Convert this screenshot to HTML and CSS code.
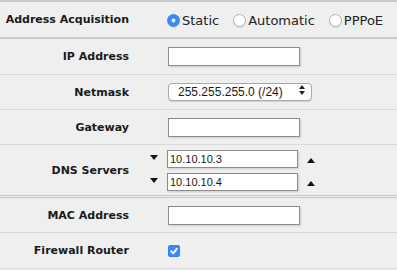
FILE: index.html
```html
<!DOCTYPE html>
<html lang="en">
<head>
    <meta charset="UTF-8">
    <title>Interface Settings</title>
    <link rel="stylesheet" href="styles.css">
</head>
<body>

    <!-- Interface Settings -->
    <form class="settings">

        <div class="row row-acq group-end">
            <div class="label">Address Acquisition</div>
            <div class="control radios">
                <label class="radio"><input type="radio" name="acq" checked>Static</label>
                <label class="radio"><input type="radio" name="acq">Automatic</label>
                <label class="radio"><input type="radio" name="acq">PPPoE</label>
            </div>
        </div>

        <div class="row row-tall">
            <div class="label">IP Address</div>
            <div class="control"><input type="text" class="field"></div>
        </div>

        <div class="row">
            <div class="label">Netmask</div>
            <div class="control">
                <div class="select-wrap">
                    <select class="select">
                        <option>255.255.255.0 (/24)</option>
                    </select>
                    <svg class="select-arrows" width="6" height="10" viewBox="0 0 6 10">
                        <path d="M3 0 L6 4 L0 4 Z M0 6 L6 6 L3 10 Z" fill="#222"/>
                    </svg>
                </div>
            </div>
        </div>

        <div class="row">
            <div class="label">Gateway</div>
            <div class="control"><input type="text" class="field"></div>
        </div>

        <div class="row row-dns group-end-double">
            <div class="label dns-label">DNS Servers</div>

            <span class="arrow arrow-down"></span>
            <div class="control dns-line">
                <input type="text" class="field field-dns" value="10.10.10.3">
                <span class="arrow arrow-up"></span>
            </div>

            <span class="arrow arrow-down"></span>
            <div class="control dns-line">
                <input type="text" class="field field-dns" value="10.10.10.4">
                <span class="arrow arrow-up"></span>
            </div>
        </div>

        <div class="row">
            <div class="label">MAC Address</div>
            <div class="control"><input type="text" class="field"></div>
        </div>

        <div class="row row-tall">
            <div class="label">Firewall Router</div>
            <div class="control">
                <span class="check">
                    <svg width="12" height="12" viewBox="0 0 12 12">
                        <path d="M3.2 6.3 L5.2 8.4 L8.9 3.6" fill="none" stroke="#fff" stroke-width="1.8" stroke-linecap="round" stroke-linejoin="round"/>
                    </svg>
                </span>
            </div>
        </div>

    </form>

</body>
</html>
```

FILE: styles.css
```css
/* Interface settings form */
body {
    margin: 0;
    padding: 0;
    background-color: #efefef;
    color: #1a1a1a;
    font-family: "DejaVu Sans", Verdana, sans-serif;
}

.settings {
    margin: 0;
    border-top: 2px solid #cbcbcb;
}

/* Rows */
.row {
    display: grid;
    grid-template-columns: 129px 39px 1fr;
    align-items: center;
    height: 34px;
    border-bottom: 1px solid #d9d9d9;
}

.row-acq {
    height: 35px;
}

.row-tall {
    height: 35px;
}

.group-end {
    border-bottom: 2px solid #cbcbcb;
}

.group-end-double {
    border-bottom: 3px double #c6c6c6;
}

.label {
    grid-column: 1;
    text-align: right;
    font-weight: bold;
    font-size: 11px;
    color: #1a1a1a;
}

.control {
    grid-column: 3;
    display: flex;
    align-items: center;
}

/* Radios */
.radios {
    margin-left: -1px;
    gap: 14px;
    padding-top: 2px;
}

.radio {
    display: flex;
    align-items: center;
    font-size: 13px;
    color: #222;
}

.radio input {
    appearance: none;
    -webkit-appearance: none;
    width: 13px;
    height: 13px;
    margin: 0 2px 0 0;
    border: 1px solid #b0b0b0;
    border-radius: 50%;
    background: #fff;
    box-shadow: 0 1px 1px rgba(0, 0, 0, 0.08);
}

.radio input:checked {
    border-color: #3a84ef;
    background: radial-gradient(circle, #fff 0 1.6px, #3c8af6 2.3px);
}

/* Text fields */
.field {
    box-sizing: border-box;
    width: 132px;
    height: 19px;
    margin: 0;
    padding: 0 2px;
    border: 1px solid #8c8c8c;
    background: #fff;
    box-shadow: 1px 1px 2px rgba(0, 0, 0, 0.15);
    font-family: "Liberation Sans", Arial, sans-serif;
    font-size: 11px;
    color: #1a1a1a;
    outline: none;
}

.field-dns {
    width: 131px;
    height: 18px;
    margin-left: -1px;
}

/* Select */
.select-wrap {
    position: relative;
    margin-top: -2px;
}

.select {
    appearance: none;
    -webkit-appearance: none;
    box-sizing: border-box;
    width: 144px;
    height: 18px;
    margin: 0;
    padding: 0 0 0 9px;
    border: 1px solid #a8a8a8;
    border-radius: 4px;
    background: #fff;
    box-shadow: 0 1px 1px rgba(0, 0, 0, 0.12);
    font-family: "Liberation Sans", Arial, sans-serif;
    font-size: 12px;
    line-height: 16px;
    color: #1a1a1a;
}

.select-arrows {
    position: absolute;
    right: 7px;
    top: 4px;
}

/* DNS */
.row-dns {
    height: 50px;
    grid-template-rows: 18px 18px;
    row-gap: 5px;
    align-content: center;
}

.dns-label {
    grid-row: 1 / span 2;
}

.dns-line {
    gap: 9px;
}

.arrow {
    width: 0;
    height: 0;
    border-left: 4px solid transparent;
    border-right: 4px solid transparent;
}

.arrow-down {
    grid-column: 2;
    justify-self: end;
    margin-right: 10px;
    margin-top: -3px;
    border-top: 5px solid #111;
}

.arrow-up {
    margin-top: 3px;
    border-bottom: 5px solid #111;
}

/* Checkbox */
.check {
    display: flex;
    width: 12px;
    height: 12px;
    margin-top: 1px;
    border-radius: 3px;
    background: #3c8af6;
    box-shadow: inset 0 0 0 1px #3580ec;
}
```
